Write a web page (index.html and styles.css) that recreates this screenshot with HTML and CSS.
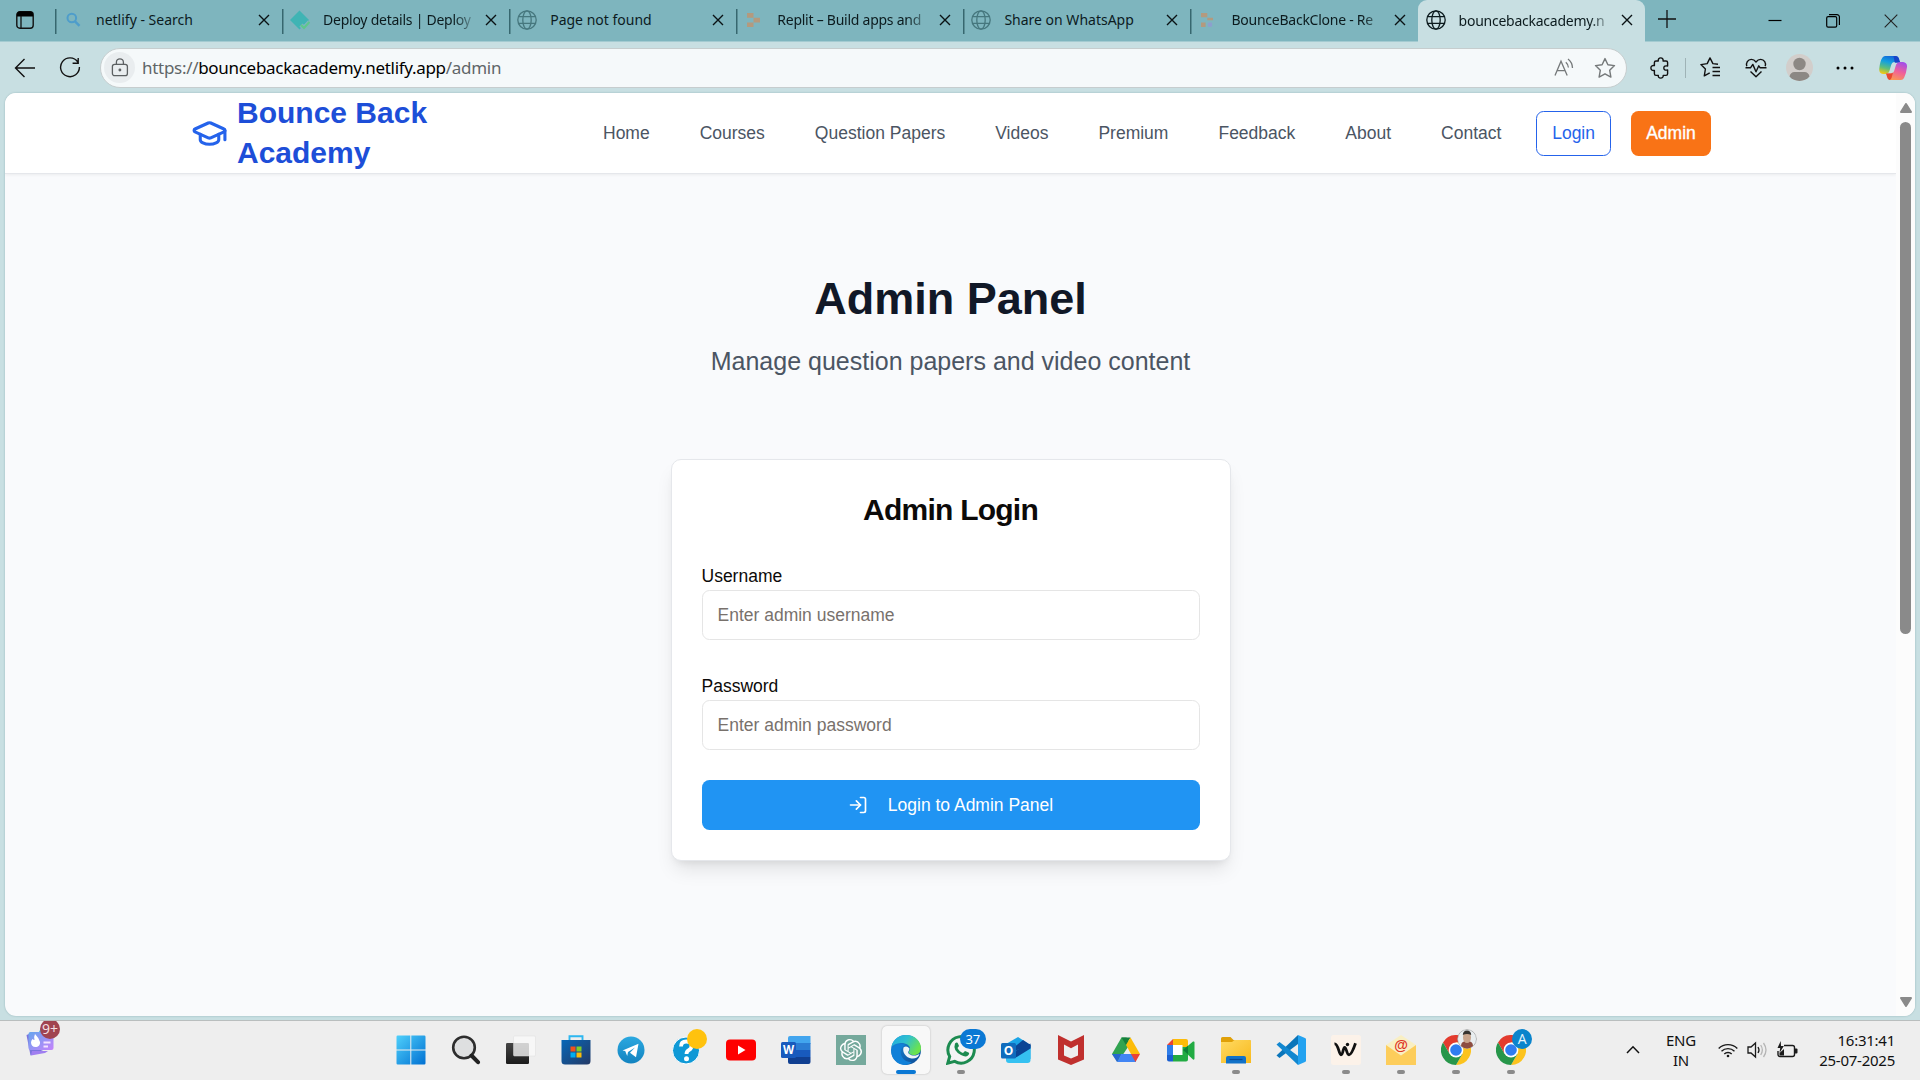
FILE: index.html
```html
<!DOCTYPE html>
<html lang="en">
<head>
<meta charset="utf-8">
<title>Bounce Back Academy - Admin</title>
<link rel="stylesheet" href="styles.css">
</head>
<body>
<svg class="defs" width="0" height="0" aria-hidden="true">
  <defs>
    <symbol id="globe" viewBox="0 0 20 20"><g fill="none" stroke="currentColor" stroke-width="1.3"><circle cx="10" cy="10" r="9.2"/><ellipse cx="10" cy="10" rx="4.2" ry="9.2"/><path d="M1.6 6.7h16.8M1.6 13.3h16.8"/></g></symbol>
    <symbol id="close" viewBox="0 0 12 12"><path d="M1 1l10 10M11 1L1 11" fill="none" stroke="currentColor" stroke-width="1.4"/></symbol>
    <linearGradient id="win" x1="0" y1="0" x2="1" y2="1"><stop offset="0" stop-color="#4fd0fb"/><stop offset="1" stop-color="#0070d2"/></linearGradient>
    <linearGradient id="dark" x1="0" y1="0" x2="0" y2="1"><stop offset="0" stop-color="#454545"/><stop offset="1" stop-color="#1b1b1b"/></linearGradient>
    <linearGradient id="store" x1="0" y1="0" x2="1" y2="1"><stop offset="0" stop-color="#0767b8"/><stop offset="1" stop-color="#243a66"/></linearGradient>
    <linearGradient id="tele" x1="0" y1="0" x2="0" y2="1"><stop offset="0" stop-color="#2ba8e0"/><stop offset="1" stop-color="#1283c0"/></linearGradient>
    <linearGradient id="folder" x1="0" y1="0" x2="1" y2="1"><stop offset="0" stop-color="#ffda63"/><stop offset="1" stop-color="#f8b91c"/></linearGradient>
    <linearGradient id="edgeTop" x1="0" y1="0" x2="1" y2=".5"><stop offset="0" stop-color="#20a8e0"/><stop offset=".5" stop-color="#2fc0d0"/><stop offset="1" stop-color="#6be34e"/></linearGradient>
    <linearGradient id="edgeLow" x1="0" y1="0" x2="1" y2="1"><stop offset="0" stop-color="#1b8ee0"/><stop offset="1" stop-color="#0c4a93"/></linearGradient>
    <linearGradient id="copA" x1=".6" y1="0" x2=".3" y2="1"><stop offset="0" stop-color="#1466d8"/><stop offset=".35" stop-color="#12a0e0"/><stop offset=".7" stop-color="#5fbf7a"/><stop offset="1" stop-color="#f0c815"/></linearGradient>
    <linearGradient id="copB" x1=".7" y1="0" x2=".3" y2="1"><stop offset="0" stop-color="#a350e8"/><stop offset=".5" stop-color="#f0609a"/><stop offset="1" stop-color="#fb9a50"/></linearGradient>
    <linearGradient id="widget" x1="0" y1="0" x2="1" y2="1"><stop offset="0" stop-color="#66a6ee"/><stop offset="1" stop-color="#c583fb"/></linearGradient>
    <symbol id="chrome" viewBox="0 0 30 30">
      <path fill="#e33b2e" d="M15 7.5h13A15 15 0 0 0 2 7.5l6.5 11.3z"/><path fill="#fcc31e" d="M15 7.5h13A15 15 0 0 1 15 30l6.5-11.2z"/><path fill="#27964a" d="M8.5 18.8L2 7.5A15 15 0 0 0 15 30l6.5-11.2z"/><circle cx="15" cy="15" r="7.4" fill="#fff"/><circle cx="15" cy="15" r="5.8" fill="#2f7df0"/>
    </symbol>
  </defs>
</svg>

<div class="window">
  <div class="tabstrip">
    <div class="tab-actions"><svg width="18" height="18" viewBox="0 0 18 18"><rect x=".8" y=".8" width="16.4" height="16.4" rx="3" fill="none" stroke="#111" stroke-width="1.4"/><path d="M1 5.5V3.5a3 3 0 0 1 3-3h10a3 3 0 0 1 3 3v2z" fill="#000"/><path d="M5 5v12" stroke="#111" stroke-width="1.3"/></svg></div>
    <div class="tab"><svg class="fav" viewBox="0 0 20 20"><circle cx="8.8" cy="8" r="4.3" fill="none" stroke="#4e9dcb" stroke-width="2"/><path d="M12 11.3l4.5 4.5" stroke="#4e9dcb" stroke-width="2.4"/></svg><span class="tab-title">netlify - Search</span><svg class="x"><use href="#close"/></svg></div>
    <div class="tab"><svg class="fav" viewBox="0 0 20 20"><path d="M9.5 0.5l9.5 9.5-9.5 9.5L0 10z" fill="#3fb4b4"/><path d="M11 15l3 3 5.500-6" fill="none" stroke="#7eb5be" stroke-width="4.500"/><path d="M11 15l3 3 5.500-6" fill="none" stroke="#5ec78c" stroke-width="2.200"/></svg><span class="tab-title long">Deploy details | Deploy</span><svg class="x"><use href="#close"/></svg></div>
    <div class="tab"><svg class="fav dim"><use href="#globe"/></svg><span class="tab-title">Page not found</span><svg class="x"><use href="#close"/></svg></div>
    <div class="tab"><svg class="fav" viewBox="0 0 20 20"><path d="M3 3h6.5v4.7H3zM9.5 7.7H16v4.7H9.5zM3 12.4h6.5v4.7H3z" fill="#b39a7e"/></svg><span class="tab-title long">Replit – Build apps and</span><svg class="x"><use href="#close"/></svg></div>
    <div class="tab"><svg class="fav dim"><use href="#globe"/></svg><span class="tab-title">Share on WhatsApp</span><svg class="x"><use href="#close"/></svg></div>
    <div class="tab"><svg class="fav" viewBox="0 0 20 20"><path d="M3 3h6.3v4.3H3zM9.3 7.7H15v2.6H9.3zM3 12.4h4.6v4.7H3z" fill="#b39a7e"/><rect x="9.8" y="12.4" width="4.3" height="4.3" rx="1" fill="#8d9fce"/></svg><span class="tab-title long">BounceBackClone - Re</span><svg class="x"><use href="#close"/></svg></div>
    <div class="tab active"><svg class="fav"><use href="#globe"/></svg><span class="tab-title long">bouncebackacademy.n</span><svg class="x"><use href="#close"/></svg></div>
    <div class="newtab"><svg width="18" height="18" viewBox="0 0 18 18"><path d="M9 0v18M0 9h18" stroke="#111" stroke-width="1.3"/></svg></div>
    <div class="win-controls">
      <svg width="14" height="14" viewBox="0 0 14 14"><path d="M.5 6.5h13" stroke="#000" stroke-width="1.2"/></svg>
      <svg width="14" height="14" viewBox="0 0 14 14"><rect x=".7" y="2.7" width="10" height="10.4" rx="1.4" fill="none" stroke="#000" stroke-width="1.2"/><path d="M3 .7h8a2.4 2.4 0 0 1 2.4 2.4V11" fill="none" stroke="#000" stroke-width="1.2"/></svg>
      <svg width="14" height="14" viewBox="0 0 14 14"><path d="M.7.7l12.6 12.6M13.3.7L.7 13.3" stroke="#222" stroke-width="1.1"/></svg>
    </div>
  </div>

  <div class="toolbar">
    <svg class="back" width="22" height="20" viewBox="0 0 22 20" fill="none" stroke="#111" stroke-width="1.4"><path d="M21 10H1.5M10.5 1l-9 9 9 9"/></svg>
    <svg class="reload" width="22" height="22" viewBox="0 0 22 22" fill="none" stroke="#111" stroke-width="1.4"><path d="M18.8 5A9.4 9.4 0 1 0 20.4 10M19.2 1v5.3h-5.6"/></svg>
    <div class="address">
      <span class="lock"><svg width="18" height="19" viewBox="0 0 18 19" fill="none" stroke="#5c6062" stroke-width="1.3"><rect x="1.4" y="6.4" width="15" height="11.2" rx="2.2"/><path d="M5.4 6.4V4.3a3.5 3.5 0 0 1 7 0v2.1"/><circle cx="8.9" cy="12" r=".8" fill="#5c6062"/></svg></span>
      <span class="url">https://<b>bouncebackacademy.netlify.app</b>/admin</span>
      <svg class="read" width="20" height="19" viewBox="0 0 20 19" fill="none" stroke="#75797a" stroke-width="1.3"><path d="M1 17.5L7 3.2l6.2 14.3M3.2 12.6h7.8M11.8 4.2q2.6 2.2 2.6 5.4M14 1q4.4 3.4 4.5 9"/></svg>
      <svg width="22" height="22" viewBox="0 0 22 22" fill="none" stroke="#75797a" stroke-width="1.4" stroke-linejoin="round"><path d="M11 1.6l2.9 6.2 6.6.8-4.8 4.7 1.2 6.8-5.9-3.3-5.9 3.3 1.2-6.8L1.5 8.6l6.6-.8z"/></svg>
    </div>
    <svg class="ext" width="20" height="22" viewBox="0 0 20 22" fill="none" stroke="#111" stroke-width="1.4" stroke-linejoin="round"><path d="M6 4h2.3C8 2 9 .9 10.700 .9S13.400 2 13.100 4H16a1.600 1.600 0 0 1 1.600 1.600V9c-2.400-.5-3.800.3-3.800 2s1.400 2.500 3.800 2v3.800a1.600 1.600 0 0 1-1.600 1.600h-2.800c.2 1.700-.8 2.700-2.500 2.700s-2.700-1-2.400-2.700H6a1.600 1.600 0 0 1-1.600-1.600v-3.400C2.100 13.700.9 12.800.9 11s1.200-2.700 3.500-2.400V5.600A1.600 1.600 0 0 1 6 4z"/></svg>
    <i class="bar"></i>
    <svg class="favs" width="21" height="21" viewBox="0 0 21 21" fill="none" stroke="#111" stroke-width="1.4" stroke-linejoin="round"><path d="M18 7.200l-5.100-.6L10 .9 7.200 6.600.9 7.600l4.500 4.400-1.100 6.900 5.400-3M12.500 10.500H20M12.500 14.500H20M12.500 18.500H20"/></svg>
    <svg class="heart" width="22" height="20" viewBox="0 0 22 20" fill="none" stroke="#111" stroke-width="1.4" stroke-linejoin="round"><path d="M1.800 8.300C.6 5 2.800 1.400 6.300 1.400c2 0 3.500 1 4.700 2.600 1.200-1.600 2.700-2.600 4.700-2.600 3.500 0 5.700 3.600 4.500 6.900M.5 9.800h5l2.300-3.400 3.200 7.400 2.800-6 1.400 2h6.300M5.500 13.500l5.500 5.300 5.500-5.300"/></svg>
    <svg class="avatar" width="27" height="27" viewBox="0 0 27 27"><circle cx="13.500" cy="13.500" r="13.500" fill="#d2cecb"/><circle cx="13.500" cy="10" r="6.200" fill="#8c8884"/><path d="M3.500 22.500q1-4.500 5-4.500h10q4 0 5 4.500a13.500 13.500 0 0 1-20 0z" fill="#8c8884"/></svg>
    <svg class="dots" width="18" height="6" viewBox="0 0 18 6"><circle cx="2" cy="3" r="1.500"/><circle cx="9" cy="3" r="1.500"/><circle cx="16" cy="3" r="1.500"/></svg>
    <svg class="copilot" width="28" height="26" viewBox="0 0 28 26"><path d="M6 1h10q3 0 3.500 3l1 3h-5q-2.500 0-3.300 3l-1.800 6q-1 3-4 3H4q-4-.5-3.800-5Q1 6 3.500 2.500 4.500 1 6 1z" fill="url(#copA)"/><path d="M14.500 1h2q3 0 3.600 3l1.200 3.800h-5.500z" fill="#1745c8"/><path d="M22 25H12q-3 0-3.500-3l-1-3.500h4q3 0 3.800-3l1.800-6q1-2.500 4-2.500h3q4.200.5 3.900 5-.8 7-3 11-1 2-3 2z" fill="url(#copB)"/><path d="M7 18.500h4.500q1.500 0 2.500-1l-1.500 5.500q-1 2-2 2-2-.5-2.400-3z" fill="#e8482f"/></svg>
  </div>

  <div class="page">
    <div class="content">
      <header class="site-header">
        <div class="brand">
          <svg width="37" height="37" viewBox="0 0 24 24" fill="none" stroke="#2563eb" stroke-width="2" stroke-linecap="round" stroke-linejoin="round"><path d="M21.420 10.922a1 1 0 0 0-.019-1.838L12.830 5.180a2 2 0 0 0-1.660 0L2.600 9.080a1 1 0 0 0 0 1.832l8.570 3.908a2 2 0 0 0 1.660 0z"/><path d="M22 10v6"/><path d="M6 12.500V16a6 3 0 0 0 12 0v-3.500"/></svg>
          <span>Bounce Back<br>Academy</span>
        </div>
        <nav>
          <a>Home</a><a>Courses</a><a>Question Papers</a><a>Videos</a><a>Premium</a><a>Feedback</a><a>About</a><a>Contact</a>
        </nav>
        <div class="actions"><button class="btn-login">Login</button><button class="btn-admin">Admin</button></div>
      </header>
      <main>
        <h1>Admin Panel</h1>
        <p class="sub">Manage question papers and video content</p>
        <form class="card">
          <h2>Admin Login</h2>
          <label>Username</label>
          <input type="text" placeholder="Enter admin username">
          <label>Password</label>
          <input type="password" placeholder="Enter admin password">
          <button type="button" class="submit"><svg width="20" height="20" viewBox="0 0 24 24" fill="none" stroke="#fff" stroke-width="2" stroke-linecap="round" stroke-linejoin="round"><path d="M15 3h4a2 2 0 0 1 2 2v14a2 2 0 0 1-2 2h-4"/><path d="M10 17l5-5-5-5"/><path d="M15 12H3"/></svg>Login to Admin Panel</button>
        </form>
      </main>
    </div>
    <div class="scrollbar">
      <svg width="12" height="10" viewBox="0 0 12 10"><path d="M6 1l5 8H1z" fill="#8a8a8a" stroke="#8a8a8a" stroke-width="2" stroke-linejoin="round"/></svg>
      <div class="thumb"></div>
      <svg width="12" height="10" viewBox="0 0 12 10"><path d="M6 9l5-8H1z" fill="#8a8a8a" stroke="#8a8a8a" stroke-width="2" stroke-linejoin="round"/></svg>
    </div>
  </div>
</div>

<div class="taskbar">
  <div class="widgets">
    <svg width="28" height="30" viewBox="0 0 28 30"><path d="M.5 9l5-2 14 16L4.500 29.500z" fill="#7b74dd"/><path d="M6 25h16l-3 2-14 2.500z" fill="#a07ff0"/><path d="M13 6l3-6 5 1v8z" fill="#42b8d4"/><rect x="2.500" y="6" width="25" height="18" rx="2" fill="url(#widget)"/><path d="M9 8q4 4 5 8c.4 3-1.800 5-4.500 5S5 19 5 16.500q0-2 1.500-3.500 1 1 2 1Q7.500 11 9 8z" fill="#fff"/><path d="M17.500 16.500h7M17.500 20.500h4.500" stroke="#f5e3ff" stroke-width="1.800"/></svg>
    <span class="badge-red">9+</span>
  </div>

  <div class="apps">
    <div class="app"><svg width="30" height="30" viewBox="0 0 30 30"><path d="M1.700.5h12.600v14H.5V1.700A1.200 1.200 0 0 1 1.700.5zM15.300.5h13a1.200 1.200 0 0 1 1.200 1.200v12.800H15.300zM.5 15.500h13.800v14H1.700a1.200 1.200 0 0 1-1.200-1.200zM15.300 15.500h14.200v12.800a1.200 1.200 0 0 1-1.200 1.200h-13z" fill="url(#win)"/></svg></div>
    <div class="app"><svg width="30" height="30" viewBox="0 0 30 30"><circle cx="13" cy="12.500" r="10.800" fill="#dedfe0" stroke="#2d2d2d" stroke-width="2.600"/><path d="M20.500 20.500l6.500 6.700" stroke="#222" stroke-width="4" stroke-linecap="round"/></svg></div>
    <div class="app"><svg width="30" height="30" viewBox="0 0 30 30"><rect y="8" width="23" height="21" rx="1.200" fill="url(#dark)"/><rect x="7.500" y="1" width="22" height="20" rx="1" fill="#fafafa" fill-opacity=".78" stroke="#ddd" stroke-width=".5"/></svg></div>
    <div class="app"><svg width="30" height="30" viewBox="0 0 30 30"><path d="M8.500 6V1.300h13V6" fill="none" stroke="#2db7f0" stroke-width="1.900"/><path d="M.5 5h29v21a3.500 3.500 0 0 1-3.500 3.500H4A3.500 3.500 0 0 1 .5 26z" fill="url(#store)"/><path fill="#f1511b" d="M9.500 11.500h5v5h-5z"/><path fill="#80cc28" d="M15.500 11.500h5v5h-5z"/><path fill="#00adef" d="M9.500 17.500h5v5h-5z"/><path fill="#fbbc09" d="M15.500 17.500h5v5h-5z"/></svg></div>
    <div class="app"><svg width="30" height="30" viewBox="0 0 30 30"><circle cx="15" cy="15" r="13.500" fill="url(#tele)"/><path d="M6.500 15.500l16-6.700-2.500 13.500-6-4.500 5-5.300-7 4.500-.8 4-2-5z" fill="#fff"/></svg></div>
    <div class="app"><svg width="30" height="30" viewBox="0 0 30 30"><circle cx="15" cy="15.500" r="13.500" fill="#0f99d6" stroke="#fff" stroke-width="1"/><path d="M10 11.500q0-5 5.300-5t5.200 4.500q0 2.600-2.700 4.200-2.300 1.400-2.300 3.800" fill="none" stroke="#fff" stroke-width="3.800"/><circle cx="15.500" cy="23.800" r="2.500" fill="#fff"/></svg><span class="badge-dot"></span></div>
    <div class="app"><svg width="30" height="30" viewBox="0 0 30 30"><rect y="4.500" width="30" height="21" rx="4" fill="#fe0000"/><path d="M12 10.500l7.500 4.500-7.500 4.500z" fill="#fff"/></svg></div>
    <div class="app"><svg width="30" height="30" viewBox="0 0 30 30"><path fill="#42a5ee" d="M9 1h20.500v8H7V3a2 2 0 0 1 2-2z"/><path fill="#2b7cd3" d="M7 8h22.500v7H7z"/><path fill="#185abd" d="M7 15h22.500v7H7z"/><path fill="#103f91" d="M7 22h22.500v5a2 2 0 0 1-2 2H9a2 2 0 0 1-2-2z"/><rect y="7" width="15" height="16" rx="1.500" fill="#185abd"/><text x="7.500" y="19" class="glyph" font-size="11.500">W</text></svg></div>
    <div class="app"><svg width="30" height="30" viewBox="0 0 30 30"><path fill="#75a99c" d="M0 0h30v30H0z"/><path transform="translate(3.900 3.900) scale(.925)" fill="#fff" d="M22.2819 9.8211a5.9847 5.9847 0 0 0-.5157-4.9108 6.0462 6.0462 0 0 0-6.5098-2.9A6.0651 6.0651 0 0 0 4.9807 4.1818a5.9847 5.9847 0 0 0-3.9977 2.9 6.0462 6.0462 0 0 0 .7427 7.0966 5.98 5.98 0 0 0 .511 4.9107 6.051 6.051 0 0 0 6.5146 2.9001A5.9847 5.9847 0 0 0 13.2599 24a6.0557 6.0557 0 0 0 5.7718-4.2058 5.9894 5.9894 0 0 0 3.9977-2.9001 6.0557 6.0557 0 0 0-.7475-7.0729zm-9.022 12.6081a4.4755 4.4755 0 0 1-2.8764-1.0408l.1419-.0804 4.7783-2.7582a.7948.7948 0 0 0 .3927-.6813v-6.7369l2.02 1.1686a.071.071 0 0 1 .038.052v5.5826a4.504 4.504 0 0 1-4.4945 4.4944zm-9.6607-4.1254a4.4708 4.4708 0 0 1-.5346-3.0137l.142.0852 4.783 2.7582a.7712.7712 0 0 0 .7806 0l5.8428-3.3685v2.3324a.0804.0804 0 0 1-.0332.0615L9.74 19.9502a4.4992 4.4992 0 0 1-6.1408-1.6464zM2.3408 7.8956a4.485 4.485 0 0 1 2.3655-1.9728V11.6a.7664.7664 0 0 0 .3879.6765l5.8144 3.3543-2.0201 1.1685a.0757.0757 0 0 1-.071 0l-4.8303-2.7865A4.504 4.504 0 0 1 2.3408 7.872zm16.5963 3.8558L13.1038 8.364 15.1192 7.2a.0757.0757 0 0 1 .071 0l4.8303 2.7913a4.4944 4.4944 0 0 1-.6765 8.1042v-5.6772a.79.79 0 0 0-.407-.667zm2.0107-3.0231l-.142-.0852-4.7735-2.7818a.7759.7759 0 0 0-.7854 0L9.409 9.2297V6.8974a.0662.0662 0 0 1 .0284-.0615l4.8303-2.7866a4.4992 4.4992 0 0 1 6.6802 4.66zM8.3065 12.863l-2.02-1.1638a.0804.0804 0 0 1-.038-.0567V6.0742a4.4992 4.4992 0 0 1 7.3757-3.4537l-.142.0805L8.704 5.459a.7948.7948 0 0 0-.3927.6813zm1.0976-2.3654l2.602-1.4998 2.6069 1.4998v2.9994l-2.5974 1.4997-2.6067-1.4997Z"/></svg></div>
    <div class="app current"><svg width="30" height="30" viewBox="0 0 30 30"><circle cx="15" cy="15" r="15" fill="url(#edgeLow)"/><path d="M.5 11.500C2.500 4 8 0 15 0c9 0 15 6.300 15 13 0 4.500-3 7-7 7-3.500 0-5.500-1.500-5.200-3 .3-1 1.200-1.500 1.200-3.500C19 10 14 7.500 9.500 8 5.500 8.300 2 10.200.5 11.500z" fill="url(#edgeTop)"/><path d="M1 13.500C4.500 9.300 10.500 8 14.500 10c-3 1-5 4-4.800 7.500.3 5.500 5 10 11 9.500Q18 30 13 29.900C5 29-1.500 22 1 13.500z" fill="#1180d8"/><path d="M12.500 12.500q3-2.500 6 1-.3 2.300-1.200 3.300c-.6 2 2.200 3.700 5.700 3.700 2.500 0 4-.6 5.500-1.500-1 3.500-4.500 5-8 4.500-5.500-.7-9.500-6-8-11z" fill="#eef4f8"/></svg></div>
    <div class="app open"><svg width="30" height="30" viewBox="0 0 30 30"><path d="M1.800 28.200l1.900-6.700a13.200 13.200 0 1 1 5 4.900z" fill="#f4f4f4" stroke="#1c8b50" stroke-width="3"/><path d="M9 8.500q2-2 3 0l1 2.500-1.500 2q2 4 5.500 5l2-2 3.500 1.500q1.500.8-.5 3-2.500 2-7-.5Q6.500 15.500 9 8.500z" fill="#1c8b50"/></svg><span class="badge-blue">37</span></div>
    <div class="app"><svg width="30" height="30" viewBox="0 0 30 30"><path d="M5 9L17 2l12.500 8v14L5 18z" fill="#1aa4e6"/><path d="M11 14L22 5l7.500 5v3l-14 9z" fill="#0a4595"/><path d="M5 17.500L29.500 12v13a3 3 0 0 1-3 3H8a3 3 0 0 1-3-3z" fill="#35c1f1"/><path d="M12 17L29.500 8.500v5L14 23z" fill="#0a4595"/><rect y="8" width="15" height="15.500" rx="1.500" fill="#0f6cbd"/><text x="7.500" y="20" class="glyph" font-size="12">O</text></svg></div>
    <div class="app"><svg width="30" height="30" viewBox="0 0 30 30"><path d="M2 0l13 6.500L28 0v24.500L15 30 2 24.500zM8 9.500V20.500l7 3 7-3V9.500l-7 3.700z" fill="#c0302e" fill-rule="evenodd"/></svg></div>
    <div class="app"><svg width="30" height="30" viewBox="0 0 30 30"><path fill="#31a350" d="M10.500 2.500h5L19 9 7 27 1 19z"/><path fill="#15803c" d="M10.500 2.500h9L15 10z"/><path fill="#fcbc0a" d="M19.500 2.500L29 19h-9L15 10z"/><path fill="#4285f4" d="M10 19h14l1 8H6z"/><path fill="#2766d0" d="M1 19h9l-4 8z"/><path fill="#e94335" d="M20 19h9l-4.500 8z"/></svg></div>
    <div class="app"><svg width="30" height="30" viewBox="0 0 30 30"><path fill="#e94335" d="M1 10l6-6v6z"/><path fill="#fcbc0a" d="M7 4h13a2 2 0 0 1 2 2v6h-6v-2H7z"/><path fill="#2f7de9" d="M1 10h6v10H1z"/><path fill="#1a5fd0" d="M1 20h6v6.500H3a2 2 0 0 1-2-2z"/><path fill="#22ab43" d="M7 20h9v-8h6v12.500a2 2 0 0 1-2 2H7z"/><path fill="#fff" d="M7 10h9.500v10H7z"/><path fill="#22ab43" d="M17 15l10-8.500q1.500-.5 1.500 1v16q0 1.500-1.500 1z"/><path fill="#0d7f38" d="M17 15l5-4.300v8.600z"/></svg></div>
    <div class="app open"><svg width="30" height="30" viewBox="0 0 30 30"><path d="M0 8V3.500A1.500 1.500 0 0 1 1.500 2h8l3 3H28.500A1.500 1.500 0 0 1 30 6.500V8z" fill="#e0a008"/><path d="M0 7h11l2.500-2H28.500A1.500 1.500 0 0 1 30 6.500V28H0z" fill="url(#folder)"/><path d="M5 28.500v-5.500a2 2 0 0 1 2-2h16a2 2 0 0 1 2 2v5.500z" fill="#1272c8"/><path d="M8.500 24.500h13" stroke="#0a4a94" stroke-width="1.200"/></svg></div>
    <div class="app"><svg width="30" height="30" viewBox="0 0 30 30"><path d="M22 0v9L3.500 23 .5 20.500z" fill="#0a75ba"/><path d="M3.500 7L22 21v9L.5 9.500z" fill="#1187d0"/><path d="M22 0l7 3a1.500 1.500 0 0 1 1 1.500v21a1.500 1.500 0 0 1-1 1.500l-7 3z" fill="#23a2f0"/></svg></div>
    <div class="app open"><svg width="30" height="30" viewBox="0 0 30 30"><rect width="30" height="30" rx="2.500" fill="#fcf2e9"/><path d="M3.500 8.800c4-.5 4.300 11 6.500 11s2-7.500 3.700-7.500 2 7.500 4.300 7.500 4.300-5 6.500-11.500" fill="none" stroke="#111" stroke-width="2.800"/><circle cx="16.500" cy="9.500" r="1.700" fill="#111"/></svg></div>
    <div class="app open"><svg width="30" height="30" viewBox="0 0 30 30"><path d="M0 10L15 0l15 10v10H0z" fill="#f9efc3"/><path d="M0 10l15 10.500L30 10v20H0z" fill="#fdcd5b"/><text x="15" y="14.500" class="at" font-size="14">@</text></svg></div>
    <div class="app open"><svg width="30" height="30"><use href="#chrome"/></svg><svg class="corner" width="20" height="20" viewBox="0 0 20 20"><circle cx="10" cy="10" r="9.500" fill="#e9eef0" stroke="#999" stroke-width=".7"/><path d="M4 17q0-5 6-5t6 5q-6 5-12 0z" fill="#8d4e42"/><ellipse cx="10" cy="8.500" rx="4" ry="5.500" fill="#c9a58c"/><path d="M5.800 6q.2-4.500 4.200-4.500T14.200 6q-4.200-2-8.400 0z" fill="#373430"/></svg></div>
    <div class="app open"><svg width="30" height="30"><use href="#chrome"/></svg><span class="badge-a">A</span></div>
  </div>

  <div class="tray">
    <svg class="chev" width="14" height="9" viewBox="0 0 14 9"><path d="M1 8l6-6.200L13 8" fill="none" stroke="#111" stroke-width="1.500"/></svg>
    <div class="lang">ENG<br>IN</div>
    <svg class="wifi" width="20" height="16" viewBox="0 0 20 16" fill="none" stroke="#1a1a1a" stroke-width="1.400"><path d="M.7 6.500a13 13 0 0 1 18.600 0M3.500 9.300a9.200 9.200 0 0 1 13 0M6.300 12a5.300 5.300 0 0 1 7.400 0"/><circle cx="10" cy="14" r="1.300" fill="#1a1a1a" stroke="none"/></svg>
    <svg class="vol" width="21" height="18" viewBox="0 0 21 18" fill="none" stroke="#1a1a1a" stroke-width="1.300"><path d="M1 6h3l4.500-4v14L4 12H1zM11 6q2 3 0 6"/><path d="M13.700 4q3.300 5 0 10M16.500 2q5 7 0 14" stroke="#b5b5b5"/></svg>
    <svg class="bat" width="21" height="17" viewBox="0 0 21 17"><path d="M7 4.500h8.500a2 2 0 0 1 2 2v7a2 2 0 0 1-2 2H3a2 2 0 0 1-2-2V10" fill="none" stroke="#1a1a1a" stroke-width="1.400"/><path d="M3.700 0L.5 7h2.700L2.500 12l4.300-7H4z" fill="#1a1a1a"/><path d="M2.500 14.500V12L7 8v6.500z" fill="#1a1a1a"/><path d="M18 7.500h1.500q1 0 1 1v3q0 1-1 1H18z" fill="#1a1a1a"/></svg>
    <div class="clock">16:31:41<br>25-07-2025</div>
  </div>
</div>
</body>
</html>
```
FILE: styles.css
```css
* { box-sizing: border-box; }
body { margin: 0; width: 1920px; height: 1080px; overflow: hidden; background: #c8dfe2; font-family: "Liberation Sans", Arial, sans-serif; font-size: 17.5px; }
svg { display: block; flex: none; }
.defs { position: absolute; }
button { font: inherit; }

/* Browser window */
.window { height: 1020px; display: flex; flex-direction: column; background: #c8dfe2; }
.tabstrip { height: 42px; flex: none; display: flex; background: #7eb5be; border-bottom: 1px solid #a4cbd1; font-family: "Noto Sans", "Open Sans", sans-serif; font-size: 14px; }
.tab-actions { width: 55px; padding: 11px 0 0 16px; }
.tab { width: 227.1px; display: flex; align-items: center; padding: 0 12px 2px 8px; color: #0c1b1e; background: linear-gradient(#37676f, #37676f) 0 9px / 1.5px 25px no-repeat; }
.fav { width: 20px; height: 20px; }
.dim { color: #46777e; }
.tab-title { flex: 1; margin-left: 13px; margin-right: 3px; white-space: nowrap; }
.long { letter-spacing: -0.25px; mask-image: linear-gradient(90deg, #000 82%, transparent 98%); }
.tab .x { width: 12px; height: 12px; color: #0a1214; }
.tab.active { height: 43px; background: #c8dfe2; border-radius: 9px 9px 0 0; z-index: 1; padding-bottom: 3px; }
.newtab { padding: 10px 0 0 13px; flex: 1; }
.win-controls { display: flex; gap: 44px; padding: 14px 22px 0 0; }

.toolbar { height: 51px; flex: none; display: flex; align-items: center; padding: 0 13px 0 14px; }
.reload { margin: 0 19px 0 23px; }
.address { width: 1527px; flex: none; height: 40px; display: flex; align-items: center; background: #f5f9fa; border: 1.5px solid #c6cdce; border-radius: 20px; padding: 0 10px 0 3px; margin-right: 23px; }
.lock { width: 31px; height: 31px; border-radius: 50%; background: #e9edef; display: flex; align-items: center; justify-content: center; }
.url { flex: 1; margin-left: 7px; font-family: "Noto Sans", "Open Sans", sans-serif; font-size: 17px; letter-spacing: -0.3px; color: #5f6668; }
.url b { font-weight: 400; color: #000; }
.read { margin-right: 20px; }
.bar { width: 1px; height: 20px; background: #9fb3b6; margin: 0 14px 0 15px; }
.heart { margin-left: 24px; }
.avatar { margin-left: 19px; }
.dots { margin-left: 23px; }
.copilot { margin-left: 25px; }

.page { width: 1910px; height: 923px; flex: none; margin-left: 5px; display: flex; background: #f9fafc; border-radius: 11px; overflow: hidden; box-shadow: 0 0 2px #8fb0b5; }
.content { width: 1891px; }
.scrollbar { width: 19px; background: #fcfcfc; display: flex; flex-direction: column; align-items: center; padding: 10px 0 9px; }
.thumb { width: 11px; height: 512px; margin: 9px 0 auto; border-radius: 6px; background: #8a8a8a; }

/* Site */
.site-header { height: 81px; padding: 0 185px 0 186px; display: flex; align-items: center; background: #fff; border-bottom: 1px solid #e5e7eb; box-shadow: 0 1px 3px rgba(0,0,0,.06); }
.brand { display: flex; align-items: center; gap: 9px; width: 412px; font-size: 30px; line-height: 40px; font-weight: 700; color: #1d4ed8; }
nav { display: flex; gap: 50px; color: #4b5563; }
.actions { display: flex; gap: 20px; margin-left: auto; }
.actions button { height: 45px; border-radius: 7.5px; padding: 0 15px; cursor: pointer; }
.btn-login { border: 1.25px solid #2563eb; background: #fff; color: #2563eb; }
.btn-admin { border: 0; background: #f97316; color: #fff; width: 80px; -webkit-text-stroke: .35px #fff; }

main { padding-top: 100px; display: flex; flex-direction: column; align-items: center; }
h1 { margin: 0 0 20px; font-size: 45px; line-height: 50px; color: #111827; }
.sub { margin: 0 0 80px; font-size: 25px; line-height: 35px; color: #4b5563; }
.card { width: 560px; height: 402px; padding: 30px; display: flex; flex-direction: column; background: #fff; border: 1px solid #e5e7eb; border-radius: 10px; box-shadow: 0 12px 19px -4px rgba(0,0,0,.1), 0 5px 8px -5px rgba(0,0,0,.1); color: #0c0a09; }
h2 { margin: 0 0 33px; font-size: 30px; line-height: 40px; letter-spacing: -.75px; text-align: center; }
label { line-height: 27px; }
input { height: 50px; margin-bottom: 33px; padding: 0 15px; border: 1px solid #e5e5e5; border-radius: 7.5px; background: #fff; font: inherit; }
input[type="password"] { margin-bottom: 30px; }
input::placeholder { color: #78716c; opacity: 1; }
.submit { height: 50px; border: 0; border-radius: 7.5px; background: #2094f3; color: #fff; display: flex; gap: 20px; align-items: center; justify-content: center; }

/* Taskbar */
.taskbar { height: 60px; display: flex; background: #eee; border-top: 1px solid #b9bebe; overflow: hidden; font-family: "Noto Sans", "Open Sans", sans-serif; }
.widgets { width: 382px; position: relative; padding: 5px 0 0 26px; }
.badge-red { position: absolute; left: 40px; top: -2px; width: 20px; height: 20px; border-radius: 50%; background: #a04450; color: #f3dfe1; font-size: 14px; line-height: 20px; text-align: center; }
.apps { display: flex; padding-top: 5px; }
.app { position: relative; width: 48px; height: 48px; margin: 0 3.53px; border-radius: 5px; display: flex; align-items: center; justify-content: center; }
.apps { margin-left: 1px; }
.current { background: #f8f8f8; box-shadow: 0 0 2px rgba(0,0,0,.25); }
.current::after, .open::after { content: ""; position: absolute; left: 20px; bottom: 0; width: 8px; height: 4px; border-radius: 2px; background: #8a8a8a; }
.current::after { left: 14px; width: 20px; background: #0a78d4; }
.glyph { fill: #fff; font-family: "Open Sans", sans-serif; font-weight: 700; text-anchor: middle; }
.at { fill: #df3424; font-family: "Liberation Sans", sans-serif; font-weight: 700; text-anchor: middle; }
.badge-dot, .badge-a, .corner { position: absolute; left: 25px; top: 3px; width: 20px; height: 20px; border-radius: 50%; background: #ffc20e; }
.badge-a { background: #0a84cc; color: #e8f5fc; font: 14px/20px "Open Sans", sans-serif; text-align: center; }
.corner { background: none; }
.badge-blue { position: absolute; left: 23px; top: 3px; width: 26px; height: 20px; border-radius: 10px; background: #0a78d4; color: #fff; font-size: 13px; line-height: 20px; text-align: center; }
.tray { margin-left: auto; display: flex; align-items: center; padding: 0 25px 2px 0; font-size: 15px; line-height: 20px; letter-spacing: -.25px; color: #111; }
.lang { width: 40px; margin: 0 17px 0 21px; text-align: center; }
.vol { margin: 0 9px 0 9px; }
.clock { width: 82px; margin-left: 15px; text-align: right; white-space: nowrap; }
```
